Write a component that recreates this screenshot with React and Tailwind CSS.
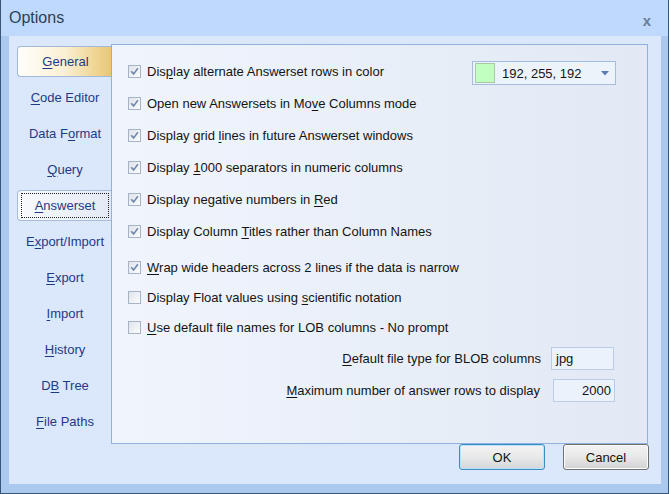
import React from "react";

const FONT = { fontFamily: '"Liberation Sans", Arial, sans-serif' };

function M({ pre = "", u, post = "" }) {
  return (
    <span>
      {pre}
      <span className="underline underline-offset-[2px]">{u}</span>
      {post}
    </span>
  );
}

function Check({ checked }) {
  return (
    <span className="w-[13px] h-[13px] border border-[#a6b4c6] bg-linear-to-br from-[#dfe4ea] to-[#fbfcfe] flex items-center justify-center shrink-0 p-[1px]">
      {checked && (
        <svg width="9" height="9" viewBox="0 0 9 9">
          <path d="M1.2 4.3 L3.6 6.9 L7.9 1.3" stroke="#6e88ad" strokeWidth="1.6" fill="none" />
        </svg>
      )}
    </span>
  );
}

const tabs = [
  { pre: "", u: "G", post: "eneral", state: "sel" },
  { pre: "", u: "C", post: "ode Editor" },
  { pre: "Data F", u: "o", post: "rmat" },
  { pre: "", u: "Q", post: "uery" },
  { pre: "", u: "A", post: "nswerset", state: "focus" },
  { pre: "E", u: "x", post: "port/Import" },
  { pre: "", u: "E", post: "xport" },
  { pre: "", u: "I", post: "mport" },
  { pre: "", u: "H", post: "istory" },
  { pre: "D", u: "B", post: " Tree" },
  { pre: "", u: "F", post: "ile Paths" },
];

const rows1 = [
  { pre: "Dis", u: "p", post: "lay alternate Answerset rows in color", c: true, dd: true },
  { pre: "Open new Answersets in Mo", u: "v", post: "e Columns mode", c: true },
  { pre: "Display grid ", u: "l", post: "ines in future Answerset windows", c: true },
  { pre: "Display ", u: "1", post: "000 separators in numeric columns", c: true },
  { pre: "Display negative numbers in ", u: "R", post: "ed", c: true },
  { pre: "Display Column ", u: "T", post: "itles rather than Column Names", c: true },
];

const rows2 = [
  { pre: "", u: "W", post: "rap wide headers across 2 lines if the data is narrow", c: true },
  { pre: "Display Float values using ", u: "s", post: "cientific notation", c: false },
  { pre: "", u: "U", post: "se default file names for LOB columns - No prompt", c: false },
];

function Tab({ t }) {
  let box = null;
  const label = (
    <span className="text-[13px] text-[#1f3a85] leading-none">
      <M pre={t.pre} u={t.u} post={t.post} />
    </span>
  );
  if (t.state === "sel") {
    box = (
      <div className="h-[31px] w-full rounded-l-[4px] border border-r-0 border-[#a3b8d6] bg-linear-to-r from-[#fffefb] via-[#fbf0d4] to-[#eac76f] flex items-center justify-center pl-[2px]">
        {label}
      </div>
    );
  } else if (t.state === "focus") {
    box = (
      <div className="h-[31px] w-full rounded-l-[4px] border border-r-0 border-[#a9bcd8] bg-linear-to-r from-[#f8fafd] to-[#e3eaf5] p-[2px] pl-[3px]">
        <div className="h-full w-full border border-dotted border-[#222] flex items-center justify-center">{label}</div>
      </div>
    );
  } else {
    box = <div className="h-[31px] w-full flex items-center justify-center pl-[2px]">{label}</div>;
  }
  return <div className="h-[36px] flex items-center">{box}</div>;
}

function Row({ r, h }) {
  return (
    <div className={`${h} flex items-center`}>
      <Check checked={r.c} />
      <span className="ml-[6px] text-[13px] text-[#141414] leading-none whitespace-nowrap">
        <M pre={r.pre} u={r.u} post={r.post} />
      </span>
      {r.dd && (
        <div className="ml-auto mr-[31px] mt-[4px] w-[144px] h-[24px] border border-[#a5bcdc] bg-[#edf3fb] flex items-center pl-[2px]">
          <div className="w-[20px] h-[20px] border border-[#a8c8a8] bg-[#c0ffc0]" />
          <span className="ml-[7px] text-[13px] text-[#141414] leading-none">192, 255, 192</span>
          <svg className="ml-auto mr-[6px]" width="8" height="5" viewBox="0 0 8 5">
            <path d="M0 0 H8 L4 4.5 Z" fill="#5b7db4" />
          </svg>
        </div>
      )}
    </div>
  );
}

export default function App() {
  return (
    <div style={FONT} className="w-[669px] h-[494px] bg-[#abc8ee] border-l border-r border-b border-[#3a5676] flex flex-col overflow-hidden">
      <div className="h-[36px] bg-[#bed9fb] flex items-center pl-[8px] pr-[17px] shrink-0">
        <span className="text-[16px] text-[#2c3f58] leading-none mt-[-1px]">Options</span>
        <span className="ml-auto text-[15px] font-bold text-[#6a7d98] leading-none mt-[4px]">x</span>
      </div>
      <div className="ml-[8px] mr-[7px] h-[448px] bg-[#dbe8fb] flex flex-col">
        <div className="flex pt-[7px] pl-[8px]">
          <div className="w-[94px] flex flex-col">
            {tabs.map((t, i) => (
              <Tab key={i} t={t} />
            ))}
          </div>
          <div className="mt-[1px] w-[537px] h-[400px] border border-[#8fb1df] bg-linear-to-r from-[#f0f5fd] to-[#e2e9f4] pt-[10px] pl-[16px] flex flex-col">
            {rows1.map((r, i) => (
              <Row key={i} r={r} h="h-[32px]" />
            ))}
            <div className="mt-[5px] flex flex-col">
              {rows2.map((r, i) => (
                <Row key={i} r={r} h="h-[30px]" />
              ))}
            </div>
            <div className="mt-[5px] h-[23px] flex items-center justify-end pr-[33px]">
              <span className="text-[13px] text-[#141414] leading-none">
                <M u="D" post="efault file type for BLOB columns" />
              </span>
              <div className="ml-[10px] w-[63px] h-[23px] border border-[#b9cde6] bg-[#ebf2fb] flex items-center pl-[4px] text-[13px] text-[#141414] leading-none">
                jpg
              </div>
            </div>
            <div className="mt-[9px] h-[23px] flex items-center justify-end pr-[32px]">
              <span className="text-[13px] text-[#141414] leading-none">
                <M u="M" post="aximum number of answer rows to display" />
              </span>
              <div className="ml-[13px] w-[62px] h-[23px] border border-[#b9cde6] bg-[#ebf2fb] flex items-center justify-end pr-[3px] text-[13px] text-[#141414] leading-none">
                2000
              </div>
            </div>
          </div>
        </div>
        <div className="flex justify-end gap-[18px] pr-[12px]">
          <button className="w-[86px] h-[26px] rounded-[3px] border border-[#3d8cc2] shadow-[inset_0_0_0_1px_#b9e3f8] bg-linear-to-b from-[#f3f3f3] via-[#e9e9e9] to-[#d3d6d9] text-[13px] text-[#141414] leading-none">
            OK
          </button>
          <button className="w-[86px] h-[26px] rounded-[3px] border border-[#707070] shadow-[inset_0_0_0_1px_#fbfbfb] bg-linear-to-b from-[#f3f3f3] via-[#e8e8e8] to-[#d2d2d2] text-[13px] text-[#141414] leading-none">
            Cancel
          </button>
        </div>
      </div>
    </div>
  );
}
